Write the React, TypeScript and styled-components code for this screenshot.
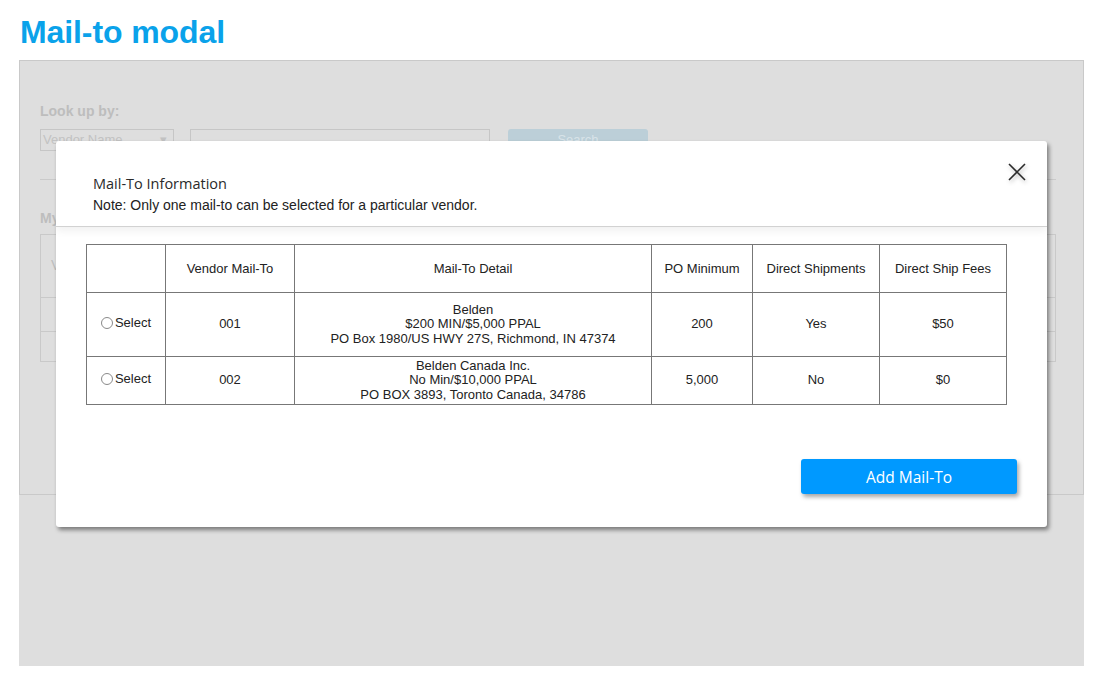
import { createGlobalStyle } from 'styled-components';
import styled from 'styled-components';

const GlobalStyle = createGlobalStyle`
  html, body {
    margin: 0;
    padding: 0;
    background: #ffffff;
  }
  body {
    font-family: "Liberation Sans", Arial, sans-serif;
  }
`;

type MailTo = {
  code: string;
  detail: string[];
  poMinimum: string;
  directShipments: string;
  fees: string;
};

const mailTos: MailTo[] = [
  {
    code: '001',
    detail: ['Belden', '$200 MIN/$5,000 PPAL', 'PO Box 1980/US HWY 27S, Richmond, IN 47374'],
    poMinimum: '200',
    directShipments: 'Yes',
    fees: '$50',
  },
  {
    code: '002',
    detail: ['Belden Canada Inc.', 'No Min/$10,000 PPAL', 'PO BOX 3893, Toronto Canada, 34786'],
    poMinimum: '5,000',
    directShipments: 'No',
    fees: '$0',
  },
];

const columns = [
  { label: '', width: 79 },
  { label: 'Vendor Mail-To', width: 129 },
  { label: 'Mail-To Detail', width: 357 },
  { label: 'PO Minimum', width: 101 },
  { label: 'Direct Shipments', width: 127 },
  { label: 'Direct Ship Fees', width: 127 },
];

const Page = styled.div`
  padding: 13px 0 0 19px;
`;

const Title = styled.h1`
  margin: 0 0 9px 1px;
  font-size: 32px;
  line-height: 38px;
  font-weight: 700;
  color: #0aa2ea;
  letter-spacing: -0.1px;
`;

const Screen = styled.div`
  position: relative;
  width: 1065px;
  height: 606px;
  background: #dedede;
`;

const Backdrop = styled.div`
  box-sizing: border-box;
  height: 435px;
  border: 1px solid #c9c9c9;
  padding: 42px 27px 0 20px;
  color: #bdbdbd;
`;

const FadedLabel = styled.div`
  font-size: 14px;
  font-weight: 700;
  line-height: 16px;
`;

const LookupRow = styled.div`
  display: flex;
  align-items: flex-start;
  gap: 16px;
  margin-top: 10px;
`;

const FadedSelect = styled.div`
  box-sizing: border-box;
  width: 134px;
  height: 22px;
  border: 1px solid #c6c6c6;
  font-size: 13px;
  line-height: 20px;
  padding-left: 2px;
  color: #c2c2c2;
  display: flex;
  justify-content: space-between;
  padding-right: 6px;
`;

const FadedInput = styled.div`
  box-sizing: border-box;
  width: 300px;
  height: 22px;
  border: 1px solid #c6c6c6;
`;

const FadedButton = styled.div`
  width: 140px;
  height: 22px;
  margin-left: 2px;
  border-radius: 3px;
  background: #bccfd8;
  color: #d8e3e8;
  font-size: 13px;
  text-align: center;
  line-height: 22px;
`;

const FadedRule = styled.div`
  height: 1px;
  background: #cacaca;
  margin-top: 28px;
`;

const FadedHeading = styled(FadedLabel)`
  margin-top: 30px;
`;

const FadedTable = styled.div`
  box-sizing: border-box;
  margin-top: 8px;
  border: 1px solid #c9c9c9;
  height: 128px;
  display: grid;
  grid-template-rows: 63px 34px 1fr;
`;

const FadedRow = styled.div`
  border-bottom: 1px solid #c9c9c9;
  padding: 22px 0 0 10px;
  font-size: 14px;
  &:last-child {
    border-bottom: none;
  }
`;

const Modal = styled.div`
  position: absolute;
  left: 37px;
  top: 81px;
  width: 991px;
  height: 386px;
  background: #ffffff;
  border-radius: 3px;
  box-shadow: 2px 3px 4px rgba(0, 0, 0, 0.45);
  display: flex;
  flex-direction: column;
  overflow: hidden;
`;

const ModalHeader = styled.div`
  position: relative;
  box-sizing: border-box;
  height: 86px;
  padding: 33px 30px 0 37px;
  border-bottom: 1px solid #d2d2d2;
  box-shadow: 0 4px 8px rgba(0, 0, 0, 0.06);
`;

const ModalTitle = styled.div`
  font-family: "Open Sans", "Noto Sans", sans-serif;
  font-size: 14.5px;
  font-weight: 500;
  line-height: 20px;
  color: #2a2a2a;
`;

const Note = styled.div`
  margin-top: 2px;
  font-size: 14px;
  line-height: 18px;
  color: #222222;
`;

const CloseButton = styled.button`
  position: absolute;
  top: 19px;
  right: 18px;
  width: 24px;
  height: 24px;
  padding: 0;
  border: none;
  background: transparent;
  cursor: pointer;
  filter: drop-shadow(1px 2px 2px rgba(0, 0, 0, 0.3));
`;

const ModalBody = styled.div`
  flex: 1;
  padding: 17px 30px 33px 30px;
  display: flex;
  flex-direction: column;
`;

const Table = styled.table`
  width: 921px;
  border-collapse: collapse;
  table-layout: fixed;
  font-size: 13px;
  color: #222222;
`;

const Col = styled.col<{ $width: number }>`
  width: ${(p) => p.$width}px;
`;

const HeadCell = styled.th`
  height: 47px;
  border: 1px solid #777777;
  font-weight: 400;
  text-align: center;
  padding: 0;
`;

const Cell = styled.td<{ $height: number }>`
  height: ${(p) => p.$height}px;
  border: 1px solid #777777;
  text-align: center;
  padding: 0;
  line-height: 14.5px;
`;

const RadioLabel = styled.label`
  display: inline-flex;
  align-items: center;
  gap: 2px;
  cursor: pointer;
`;

const Radio = styled.span`
  box-sizing: border-box;
  width: 12px;
  height: 12px;
  border-radius: 50%;
  border: 1px solid #8a8a8a;
  background: #ffffff;
`;

const Footer = styled.div`
  margin-top: auto;
  display: flex;
  justify-content: flex-end;
`;

const PrimaryButton = styled.button`
  width: 216px;
  height: 35px;
  border: none;
  border-radius: 3px;
  background: #0099ff;
  color: #ffffff;
  font-family: "Open Sans", "Noto Sans", sans-serif;
  font-size: 15.5px;
  box-shadow: 2px 3px 4px rgba(0, 0, 0, 0.35);
  cursor: pointer;
`;

export default function App() {
  return (
    <>
      <GlobalStyle />
      <Page>
        <Title>Mail-to modal</Title>
        <Screen>
          <Backdrop>
            <FadedLabel>Look up by:</FadedLabel>
            <LookupRow>
              <FadedSelect>
                <span>Vendor Name</span>
                <span>▾</span>
              </FadedSelect>
              <FadedInput />
              <FadedButton>Search</FadedButton>
            </LookupRow>
            <FadedRule />
            <FadedHeading>My Mail-Tos</FadedHeading>
            <FadedTable>
              <FadedRow>V</FadedRow>
              <FadedRow />
              <FadedRow />
            </FadedTable>
          </Backdrop>

          <Modal>
            <ModalHeader>
              <ModalTitle>Mail-To Information</ModalTitle>
              <Note>Note: Only one mail-to can be selected for a particular vendor.</Note>
              <CloseButton aria-label="Close">
                <svg width="24" height="24" viewBox="0 0 24 24">
                  <path d="M4 4 L20 20 M20 4 L4 20" stroke="#2a2a2a" strokeWidth="1.6" fill="none" />
                </svg>
              </CloseButton>
            </ModalHeader>
            <ModalBody>
              <Table>
                <colgroup>
                  {columns.map((c, i) => (
                    <Col key={i} $width={c.width} />
                  ))}
                </colgroup>
                <thead>
                  <tr>
                    {columns.map((c, i) => (
                      <HeadCell key={i}>{c.label}</HeadCell>
                    ))}
                  </tr>
                </thead>
                <tbody>
                  {mailTos.map((m, i) => (
                    <tr key={m.code}>
                      <Cell $height={i === 0 ? 63 : 47}>
                        <RadioLabel>
                          <Radio />
                          Select
                        </RadioLabel>
                      </Cell>
                      <Cell $height={i === 0 ? 63 : 47}>{m.code}</Cell>
                      <Cell $height={i === 0 ? 63 : 47}>
                        {m.detail.map((line) => (
                          <div key={line}>{line}</div>
                        ))}
                      </Cell>
                      <Cell $height={i === 0 ? 63 : 47}>{m.poMinimum}</Cell>
                      <Cell $height={i === 0 ? 63 : 47}>{m.directShipments}</Cell>
                      <Cell $height={i === 0 ? 63 : 47}>{m.fees}</Cell>
                    </tr>
                  ))}
                </tbody>
              </Table>
              <Footer>
                <PrimaryButton>Add Mail-To</PrimaryButton>
              </Footer>
            </ModalBody>
          </Modal>
        </Screen>
      </Page>
    </>
  );
}
